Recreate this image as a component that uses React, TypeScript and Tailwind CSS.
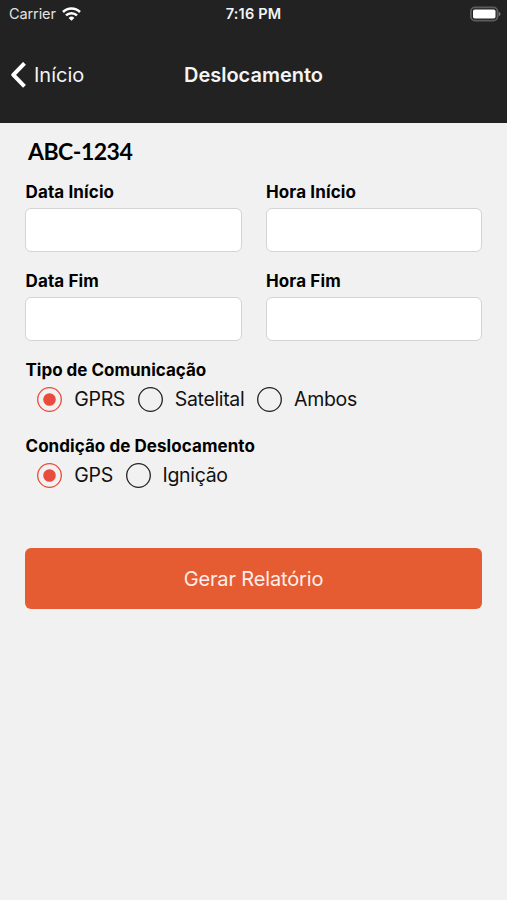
import React from "react";

interface FieldProps {
    label: string;
}

const Field: React.FC<FieldProps> = ({ label }) => {
    return (
        <label className="block">
            <span className="block h-[26px] pl-[0.5px] text-[17px] font-bold leading-[20px] tracking-[0.12px]">
                {label}
            </span>
            <input
                type="text"
                className="block h-[44px] w-full rounded-[6px] border-[1.5px] border-[#d4d4d4] bg-white px-3 focus:outline-none"
            />
        </label>
    );
};

interface RadioProps {
    label: string;
    checked?: boolean;
}

const Radio: React.FC<RadioProps> = ({ label, checked }) => {
    return (
        <div className="flex items-center gap-3">
            <svg
                width="25"
                height="25"
                viewBox="0 0 25 25"
                className={checked ? "text-[#e74c3c]" : "text-[#222]"}
            >
                <circle cx="12.5" cy="12.5" r="11.8" fill="none" stroke="currentColor" strokeWidth="1.3" />
                {checked && <circle cx="12.5" cy="12.5" r="6.3" fill="currentColor" />}
            </svg>
            <span className="text-[19.5px] leading-[26px] tracking-[-0.33px] text-[#111]">{label}</span>
        </div>
    );
};

const App: React.FC = () => {
    return (
        <div className="h-[900px] w-[507px] overflow-hidden bg-[#f1f1f1] font-['Inter',sans-serif] text-black">
            <header className="h-[123px] bg-[#222] text-[#f4f4f4]">
                {/* Barra de estado */}
                <div className="grid h-[27px] grid-cols-3 items-center">
                    <div className="flex items-center gap-[6px] pl-[9px] pt-[1px] text-[14.5px] tracking-[-0.1px] text-[#e2e2e2]">
                        Carrier
                        <svg width="19" height="14" viewBox="0 0 19 14" fill="none" stroke="#fff" strokeWidth="2.5">
                            <path d="M1 5a12 12 0 0 1 17 0M4 8.4a7.8 7.8 0 0 1 11 0" />
                            <path d="M6.6 10.9a4.1 4.1 0 0 1 5.8 0L9.5 13.8z" fill="#fff" stroke="none" />
                        </svg>
                    </div>
                    <div className="pt-[1px] text-center text-[14.5px] font-semibold tracking-[0.2px]">7:16 PM</div>
                    <div className="flex justify-end pr-[6px]">
                        <svg width="31" height="16" viewBox="0 0 31 16">
                            <rect x="0.9" y="1.4" width="26.6" height="13.2" rx="4" fill="none" stroke="#5c5c5c" strokeWidth="1.8" />
                            <rect x="3" y="3.4" width="22.5" height="9.2" rx="1.8" fill="#fff" />
                            <path d="M28.6 5.6q4 2.4 0 4.8z" fill="#777" />
                        </svg>
                    </div>
                </div>

                {/* Navegación */}
                <div className="grid h-[96px] grid-cols-[1fr_160px_1fr] items-center">
                    <button className="flex items-center gap-[8px] pl-[10px] text-[20px]">
                        <svg width="16" height="26" viewBox="0 0 16 26" fill="none" stroke="#fff" strokeWidth="4" strokeLinejoin="round">
                            <path d="M14.5 1.3 3.3 12.8l11.2 11.5" />
                        </svg>
                        Início
                    </button>
                    <h1 className="text-center text-[20px] font-semibold">Deslocamento</h1>
                </div>
            </header>

            <main className="px-[25px]">
                <h2 className="h-[59px] pl-[3px] pt-[14px] font-['Lato',sans-serif] text-[23px] font-bold leading-[28px] tracking-[-0.5px]">
                    ABC-1234
                </h2>

                <div className="grid grid-cols-2 gap-x-[24px] gap-y-[19px]">
                    <Field label="Data Início" />
                    <Field label="Hora Início" />
                    <Field label="Data Fim" />
                    <Field label="Hora Fim" />
                </div>

                <h3 className="mt-[19px] pl-[0.5px] text-[17px] font-bold leading-[20px]">Tipo de Comunicação</h3>
                <div className="mt-[6px] flex gap-[12.7px] pl-[12.3px]">
                    <Radio label="GPRS" checked />
                    <Radio label="Satelital" />
                    <Radio label="Ambos" />
                </div>

                <h3 className="mt-[24px] pl-[0.5px] text-[17px] font-bold leading-[20px] tracking-[0.06px]">
                    Condição de Deslocamento
                </h3>
                <div className="mt-[6px] flex gap-[12.7px] pl-[12.3px]">
                    <Radio label="GPS" checked />
                    <Radio label="Ignição" />
                </div>

                <button className="mt-[60px] h-[61px] w-full rounded-[6px] bg-[#e55c33] text-[20px] tracking-[-0.15px] text-[#fdeee9]">
                    Gerar Relatório
                </button>
            </main>
        </div>
    );
};

export default App;
